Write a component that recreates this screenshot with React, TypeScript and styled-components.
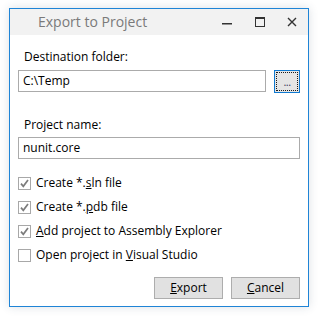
import React from "react";
import styled, { createGlobalStyle } from "styled-components";

const Global = createGlobalStyle`
  html, body { margin: 0; padding: 0; background: #ffffff; }
  body { font-family: "Open Sans", "Noto Sans", sans-serif; }
`;

const Page = styled.div`
  width: 321px;
  height: 318px;
  padding: 8px 0 0 9px;
  box-sizing: border-box;
`;

const Window = styled.div`
  width: 300px;
  height: 299px;
  box-sizing: border-box;
  border: 1px solid #1f84d6;
  background: #ffffff;
  box-shadow: 0 0 9px rgba(40, 60, 90, 0.16);
  display: flex;
  flex-direction: column;
`;

const TitleBar = styled.div`
  height: 26px;
  background: #f2f2f2;
  display: flex;
  align-items: center;
  padding-left: 28px;
`;

const Title = styled.div`
  flex: 1;
  font-size: 14px;
  color: #7a7a7a;
  line-height: 26px;
  white-space: nowrap;
`;

const Controls = styled.div`
  display: flex;
  height: 26px;
`;

const CaptionButton = styled.div<{ $w: number }>`
  width: ${(p) => p.$w}px;
  height: 26px;
  display: flex;
  align-items: center;
  justify-content: center;
`;

const Body = styled.div`
  flex: 1;
  display: flex;
  flex-direction: column;
  padding: 14px 8px 7px 8px;
`;

const Label = styled.div<{ $mt?: number }>`
  font-size: 12px;
  line-height: 16px;
  height: 16px;
  padding-left: 6px;
  color: #000;
  margin-top: ${(p) => p.$mt ?? 0}px;
  white-space: nowrap;
`;

const Row = styled.div<{ $mt?: number }>`
  display: flex;
  gap: 8px;
  margin-top: ${(p) => p.$mt ?? 0}px;
`;

const TextBox = styled.div<{ $mt?: number; $grow?: boolean }>`
  flex: ${(p) => (p.$grow ? 1 : "none")};
  height: 22px;
  box-sizing: border-box;
  border: 1px solid #ababab;
  font-size: 12px;
  line-height: 20px;
  padding-left: 4px;
  color: #000;
  margin-top: ${(p) => p.$mt ?? 0}px;
  white-space: nowrap;
`;

const BrowseButton = styled.div`
  width: 26px;
  height: 23px;
  box-sizing: border-box;
  border: 1px solid #0f79d0;
  background: #e5e5e5;
  padding: 1px;
`;

const FocusRect = styled.div`
  width: 100%;
  height: 100%;
  box-sizing: border-box;
  border: 1px dotted #1a1a1a;
  display: flex;
  align-items: flex-end;
  justify-content: center;
  font-size: 11px;
  line-height: 11px;
  color: #3a3a5a;
  padding-bottom: 3px;
  letter-spacing: -0.5px;
`;

const Checks = styled.div`
  margin-top: 13px;
  display: flex;
  flex-direction: column;
`;

const CheckRow = styled.div`
  height: 24px;
  display: flex;
  align-items: flex-start;
  gap: 5px;
`;

const Box = styled.div`
  width: 13px;
  height: 13px;
  box-sizing: border-box;
  border: 1px solid #a8a8a8;
  background: #ffffff;
  margin-top: 5px;
  display: flex;
  align-items: center;
  justify-content: center;
`;

const CheckText = styled.div`
  font-size: 12px;
  line-height: 16px;
  margin-top: 3px;
  color: #000;
  white-space: nowrap;
`;

const Footer = styled.div`
  margin-top: auto;
  display: flex;
  justify-content: flex-end;
  gap: 8px;
`;

const Button = styled.div`
  width: 69px;
  height: 22px;
  box-sizing: border-box;
  border: 1px solid #adadad;
  background: #e1e1e1;
  font-size: 12px;
  line-height: 20px;
  text-align: center;
  color: #000;
`;

const Check: React.FC<{ checked: boolean; children: React.ReactNode }> = ({ checked, children }) => (
  <CheckRow>
    <Box>
      {checked && (
        <svg width="11" height="11" viewBox="0 0 11 11">
          <path d="M2 5.6 L4.3 8.3 L9 2" fill="none" stroke="#7c7c7c" strokeWidth="1.7" />
        </svg>
      )}
    </Box>
    <CheckText>{children}</CheckText>
  </CheckRow>
);

export default function App() {
  return (
    <>
      <Global />
      <Page>
        <Window>
          <TitleBar>
            <Title>Export to Project</Title>
            <Controls>
              <CaptionButton $w={33}>
                <svg width="10" height="10" viewBox="0 0 10 10">
                  <rect x="0" y="6" width="10" height="1.5" fill="#333" />
                </svg>
              </CaptionButton>
              <CaptionButton $w={33}>
                <svg width="10" height="10" viewBox="0 0 10 10">
                  <rect x="0.5" y="0.5" width="9" height="9" fill="none" stroke="#333" strokeWidth="1" />
                  <rect x="0" y="0" width="10" height="2" fill="#333" />
                </svg>
              </CaptionButton>
              <CaptionButton $w={32}>
                <svg width="10" height="10" viewBox="0 0 10 10">
                  <path d="M1 1 L9 9 M9 1 L1 9" stroke="#333" strokeWidth="1.4" />
                </svg>
              </CaptionButton>
            </Controls>
          </TitleBar>
          <Body>
            <Label>Destination folder:</Label>
            <Row $mt={5}>
              <TextBox $grow>C:\Temp</TextBox>
              <BrowseButton>
                <FocusRect>...</FocusRect>
              </BrowseButton>
            </Row>
            <Label $mt={24}>Project name:</Label>
            <TextBox $mt={4}>nunit.core</TextBox>
            <Checks>
              <Check checked>
                Create *.<u>s</u>ln file
              </Check>
              <Check checked>
                Create *.<u>p</u>db file
              </Check>
              <Check checked>
                <u>A</u>dd project to Assembly Explorer
              </Check>
              <Check checked={false}>
                Open project in <u>V</u>isual Studio
              </Check>
            </Checks>
            <Footer>
              <Button>
                <u>E</u>xport
              </Button>
              <Button>
                <u>C</u>ancel
              </Button>
            </Footer>
          </Body>
        </Window>
      </Page>
    </>
  );
}
